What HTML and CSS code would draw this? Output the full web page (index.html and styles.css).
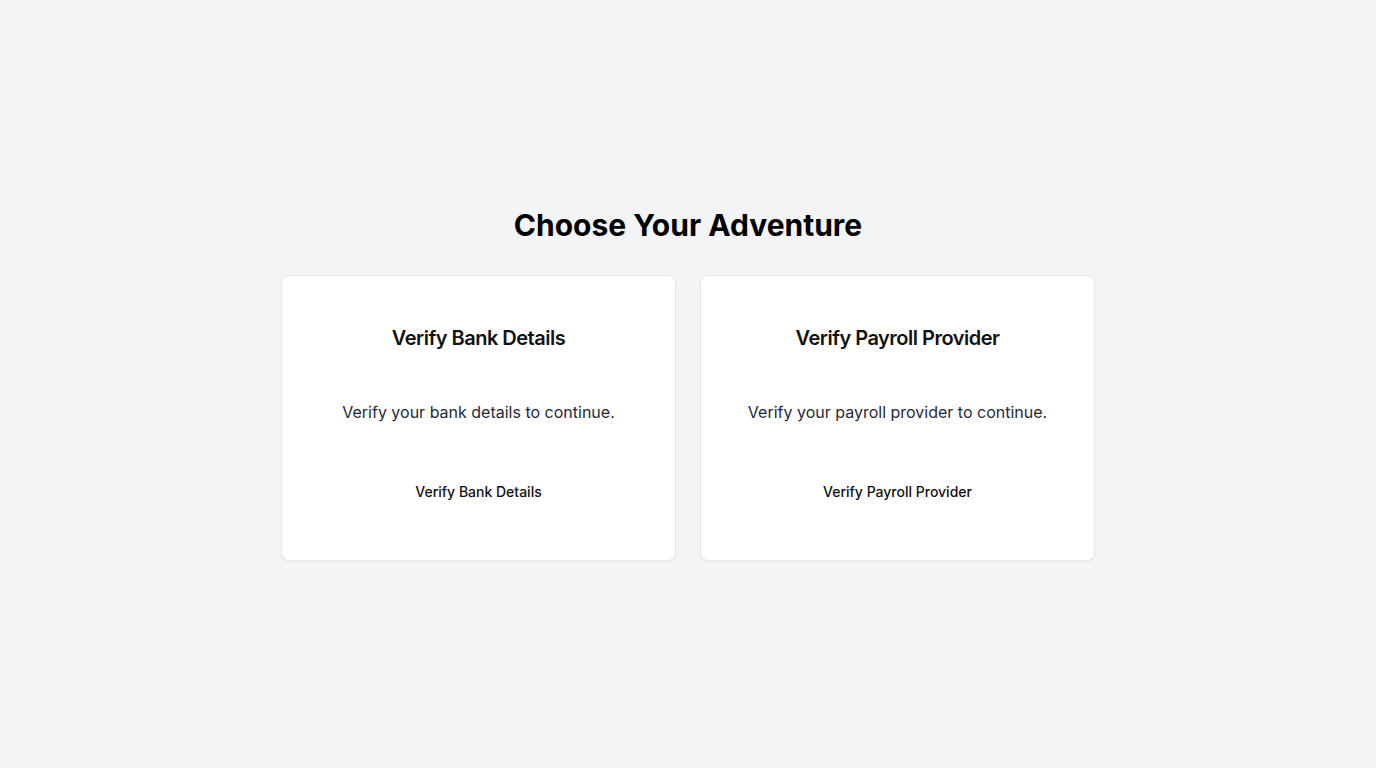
FILE: index.html
```html
<!DOCTYPE html>
<html lang="en">
<head>
<meta charset="utf-8">
<title>Choose Your Adventure</title>
<link rel="stylesheet" href="styles.css">
</head>
<body>
<main class="page">
  <h1 class="heading">Choose Your Adventure</h1>
  <div class="cards">
    <section class="card">
      <h2 class="card-title">Verify Bank Details</h2>
      <p class="card-text">Verify your bank details to continue.</p>
      <button class="card-btn" type="button">Verify Bank Details</button>
    </section>
    <section class="card">
      <h2 class="card-title">Verify Payroll Provider</h2>
      <p class="card-text">Verify your payroll provider to continue.</p>
      <button class="card-btn" type="button">Verify Payroll Provider</button>
    </section>
  </div>
</main>
</body>
</html>
```

FILE: styles.css
```css
* { box-sizing: border-box; }
html, body { margin: 0; padding: 0; }
body {
  background: #f3f4f6;
  font-family: Inter, "Noto Sans", sans-serif;
  color: #111827;
}
.page {
  min-height: 768px;
  display: flex;
  flex-direction: column;
  align-items: center;
  justify-content: center;
}
.heading {
  margin: 0 0 32px;
  font-size: 30px;
  line-height: 36px;
  font-weight: 700;
  color: #000;
}
.cards {
  display: grid;
  grid-template-columns: 395px 395px;
  gap: 24px;
}
.card {
  background: #fff;
  border: 1px solid #e5e7eb;
  border-radius: 8px;
  box-shadow: 0 1px 2px rgba(0,0,0,0.05);
  padding: 48px 24px;
  display: flex;
  flex-direction: column;
  align-items: center;
  gap: 48px;
  text-align: center;
}
.card-title {
  margin: 0;
  font-size: 20px;
  line-height: 28px;
  font-weight: 600;
  letter-spacing: -0.025em;
  color: #111;
}
.card-text {
  margin: 0;
  font-size: 16px;
  line-height: 24px;
  color: #1f2937;
}
.card-btn {
  font-family: inherit;
  font-size: 14px;
  line-height: 20px;
  font-weight: 500;
  color: #111;
  background: transparent;
  border: none;
  padding: 10px 16px;
  cursor: pointer;
}
```
